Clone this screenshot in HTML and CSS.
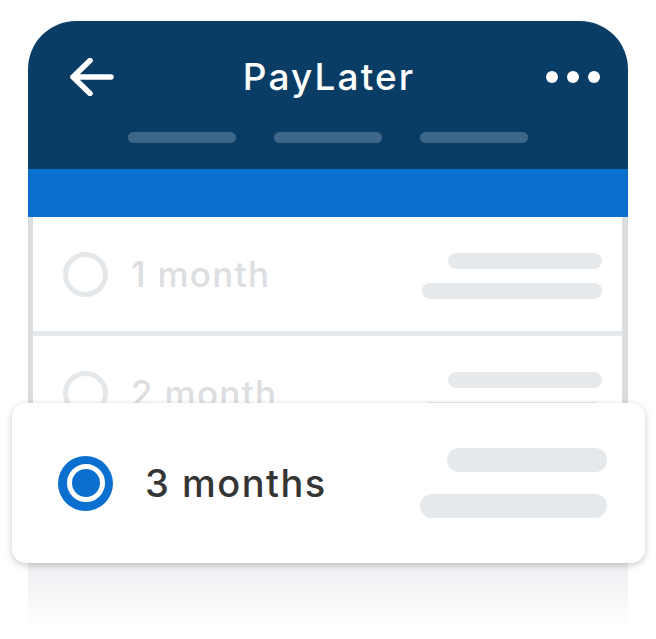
FILE: index.html
```html
<!DOCTYPE html>
<html>
<head>
<meta charset="utf-8">
<link rel="stylesheet" href="styles.css">
</head>
<body>
<div class="stage">
  <div class="phone">
    <div class="header">
      <div class="topbar">
        <svg class="back" width="44" height="38" viewBox="0 0 44 38">
          <path d="M20 2.5 L3 19 L20 35.5 M3 19 L41 19" fill="none" stroke="#fff" stroke-width="5.5" stroke-linecap="round" stroke-linejoin="round"/>
        </svg>
        <div class="title">PayLater</div>
        <div class="dots"><span></span><span></span><span></span></div>
      </div>
      <div class="tabs"><span></span><span></span><span></span></div>
    </div>
    <div class="banner"></div>
    <div class="list">
      <div class="row">
        <div class="radio"></div>
        <div class="label">1 month</div>
        <div class="bars"><span class="b1"></span><span class="b2"></span></div>
      </div>
      <div class="sep"></div>
      <div class="row">
        <div class="radio"></div>
        <div class="label">2 month</div>
        <div class="bars"><span class="b1"></span><span class="b2"></span></div>
      </div>
    </div>
    <div class="fade"></div>
  </div>
  <div class="card">
    <div class="radio-on"><span></span></div>
    <div class="card-label">3 months</div>
    <div class="card-bars"><span class="c1"></span><span class="c2"></span></div>
  </div>
</div>
</body>
</html>
```
FILE: styles.css
```css
html, body {
  margin: 0;
  padding: 0;
  background: #ffffff;
  font-family: Inter, Roboto, "Liberation Sans", sans-serif;
}
.stage {
  position: relative;
  width: 656px;
  height: 639px;
  padding-top: 21px;
  box-sizing: border-box;
}
.phone {
  margin: 0 28px;
  width: 600px;
}
.header {
  height: 148px;
  background: #093d66;
  border-radius: 48px 48px 0 0;
  display: flex;
  flex-direction: column;
  padding-top: 35px;
  box-sizing: border-box;
}
.topbar {
  height: 42px;
  display: grid;
  grid-template-columns: 1fr auto 1fr;
  align-items: center;
  padding: 0 28px;
}
.back {
  display: block;
  margin-left: 14px;
}
.title {
  color: #ffffff;
  font-size: 37px;
  font-weight: 500;
  letter-spacing: 2.1px;
  line-height: 42px;
  margin-right: -2.1px;
}
.dots {
  display: flex;
  gap: 9px;
  justify-self: end;
}
.dots span {
  width: 12px;
  height: 12px;
  border-radius: 50%;
  background: #ffffff;
}
.tabs {
  margin-top: 34px;
  display: flex;
  justify-content: center;
  gap: 38px;
}
.tabs span {
  width: 108px;
  height: 11px;
  border-radius: 6px;
  background: #3e6689;
}
.banner {
  height: 48px;
  background: #0a70cd;
}
.list {
  height: 346px;
  border-left: 5px solid #dadde0;
  border-right: 6px solid #dadde0;
  background: #ffffff;
}
.row {
  height: 114px;
  display: flex;
  align-items: center;
  padding: 0 20px 0 30px;
}
.radio {
  width: 45px;
  height: 45px;
  box-sizing: border-box;
  border: 5px solid #e5e8eb;
  border-radius: 50%;
  flex: none;
}
.label {
  margin-left: 23px;
  font-size: 35px;
  font-weight: 500;
  letter-spacing: 1.3px;
  color: #dcdee1;
  flex: 1;
}
.bars {
  display: flex;
  flex-direction: column;
  align-items: flex-end;
  gap: 14px;
  margin-top: 4px;
}
.bars span {
  height: 16px;
  border-radius: 8px;
  background: #e7eaed;
}
.bars .b1 { width: 154px; }
.bars .b2 { width: 180px; }
.sep {
  height: 5px;
  background: #e6e9ec;
}
.fade {
  height: 66px;
  background: linear-gradient(#eceef1, #ffffff);
}
.card {
  position: absolute;
  left: 12px;
  top: 403px;
  width: 633px;
  height: 160px;
  box-sizing: border-box;
  background: #ffffff;
  border-radius: 14px;
  box-shadow: 0 2px 7px rgba(0, 0, 0, 0.22);
  display: flex;
  align-items: center;
  padding: 0 38px 0 46px;
}
.radio-on {
  width: 55px;
  height: 55px;
  border-radius: 50%;
  background: #0b6fcf;
  display: flex;
  align-items: center;
  justify-content: center;
  flex: none;
}
.radio-on span {
  width: 28px;
  height: 28px;
  border-radius: 50%;
  background: #0b6fcf;
  border: 5.5px solid #ffffff;
}
.card-label {
  margin-left: 32px;
  font-size: 38px;
  font-weight: 500;
  letter-spacing: 1.5px;
  color: #353535;
  flex: 1;
}
.card-bars {
  display: flex;
  flex-direction: column;
  align-items: flex-end;
  gap: 22px;
}
.card-bars span {
  height: 24px;
  border-radius: 12px;
  background: #e6e9ec;
}
.card-bars .c1 { width: 160px; }
.card-bars .c2 { width: 187px; }
```
